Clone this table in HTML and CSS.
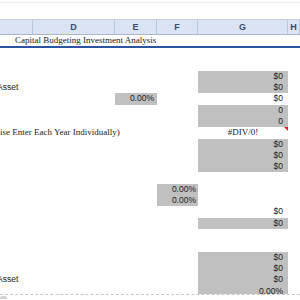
FILE: index.html
```html
<!DOCTYPE html>
<html>
<head>
<meta charset="utf-8">
<link rel="stylesheet" href="styles.css">
</head>
<body>
<div class="sheet">
  <div class="topbar"></div>
  <div class="hdr">
    <div class="hc"></div>
    <div class="hc">D</div>
    <div class="hc">E</div>
    <div class="hc">F</div>
    <div class="hc">G</div>
    <div class="hc">H</div>
  </div>
  <div class="title">Capital Budgeting Investment Analysis</div>
  <div class="rows">
    <div class="row"></div>
    <div class="row"></div>
    <div class="row"><div class="c g gray">$0</div></div>
    <div class="row"><div class="c cc lbl"><span class="cut">Asset</span></div><div class="c g gray">$0</div></div>
    <div class="row"><div class="c e gray">0.00%</div><div class="c g">$0</div></div>
    <div class="row"><div class="c g gray">0</div></div>
    <div class="row"><div class="c g gray">0</div></div>
    <div class="row"><div class="c span serif">ise Enter Each Year Individually)</div><div class="c g serif center note">#DIV/0!</div></div>
    <div class="row"><div class="c g gray">$0</div></div>
    <div class="row"><div class="c g gray">$0</div></div>
    <div class="row"><div class="c g gray">$0</div></div>
    <div class="row"></div>
    <div class="row"><div class="c f gray">0.00%</div></div>
    <div class="row"><div class="c f gray">0.00%</div></div>
    <div class="row"><div class="c g">$0</div></div>
    <div class="row"><div class="c g gray">$0</div></div>
    <div class="row"></div>
    <div class="row"></div>
    <div class="row"><div class="c g gray">$0</div></div>
    <div class="row"><div class="c g gray">$0</div></div>
    <div class="row"><div class="c cc lbl"><span class="cut">Asset</span></div><div class="c g gray">$0</div></div>
    <div class="row last"><div class="c g gray">0.00%</div></div>
  </div>
  <div class="tab"></div>
</div>
</body>
</html>
```
FILE: styles.css
```css
html, body {
  margin: 0;
  padding: 0;
  background: #ffffff;
}
.sheet {
  width: 300px;
  height: 300px;
  overflow: hidden;
  font-family: "Liberation Sans", Arial, sans-serif;
  color: #222222;
}
.topbar {
  height: 19px;
  box-sizing: border-box;
  border-top: 1px solid #ffffff;
  background: linear-gradient(#ffffff 0, #ffffff 1px, #ececec 1px, #ececec 2px, #ffffff 2px);
}
.hdr {
  display: grid;
  grid-template-columns: 33px 82px 42px 41px 90px 12px;
  height: 16px;
  box-sizing: border-box;
  background: #dae4f5;
  border-top: 1px solid #c9d1dc;
  border-bottom: 1px solid #a7b7cc;
}
.hc {
  border-right: 1px solid #b9c7dc;
  text-align: center;
  font-weight: bold;
  font-size: 9px;
  line-height: 14px;
  color: #3d4c66;
}
.title {
  height: 13px;
  box-sizing: border-box;
  border-bottom: 2px solid #2d54a0;
  font-family: "Liberation Serif", "Times New Roman", serif;
  font-size: 9px;
  line-height: 11px;
  padding-left: 15px;
  color: #1a1a1a;
  white-space: nowrap;
}
.row {
  display: grid;
  grid-template-columns: 33px 82px 42px 41px 90px 12px;
  height: 11.32px;
}
.row.last {
  height: 8.5px;
  overflow: hidden;
  border-bottom: 1px dashed #c8c8c8;
}
.c {
  font-size: 8.5px;
  line-height: 11.32px;
  text-align: right;
  white-space: nowrap;
  position: relative;
}
.cc { grid-column: 1; }
.e { grid-column: 3; padding-right: 3px; }
.f { grid-column: 4; padding-right: 2px; }
.g { grid-column: 5; padding-right: 5px; }
.span { grid-column: 1 / 4; text-align: left; }
.gray { background: #c0c0c0; }
.serif {
  font-family: "Liberation Serif", "Times New Roman", serif;
  font-size: 9px;
  color: #1a1a1a;
}
.center { text-align: center; padding-right: 0; }
.lbl {
  text-align: left;
  overflow: hidden;
}
.cut { margin-left: -3px; }
.note::after {
  content: "";
  position: absolute;
  top: 0;
  right: 0;
  border-style: solid;
  border-width: 0 4px 4px 0;
  border-color: transparent #e0201c transparent transparent;
}
.tab {
  width: 7px;
  height: 3px;
  margin-top: 1px;
  background: #d2d2d2;
  border-radius: 2px 2px 0 0;
}
```
